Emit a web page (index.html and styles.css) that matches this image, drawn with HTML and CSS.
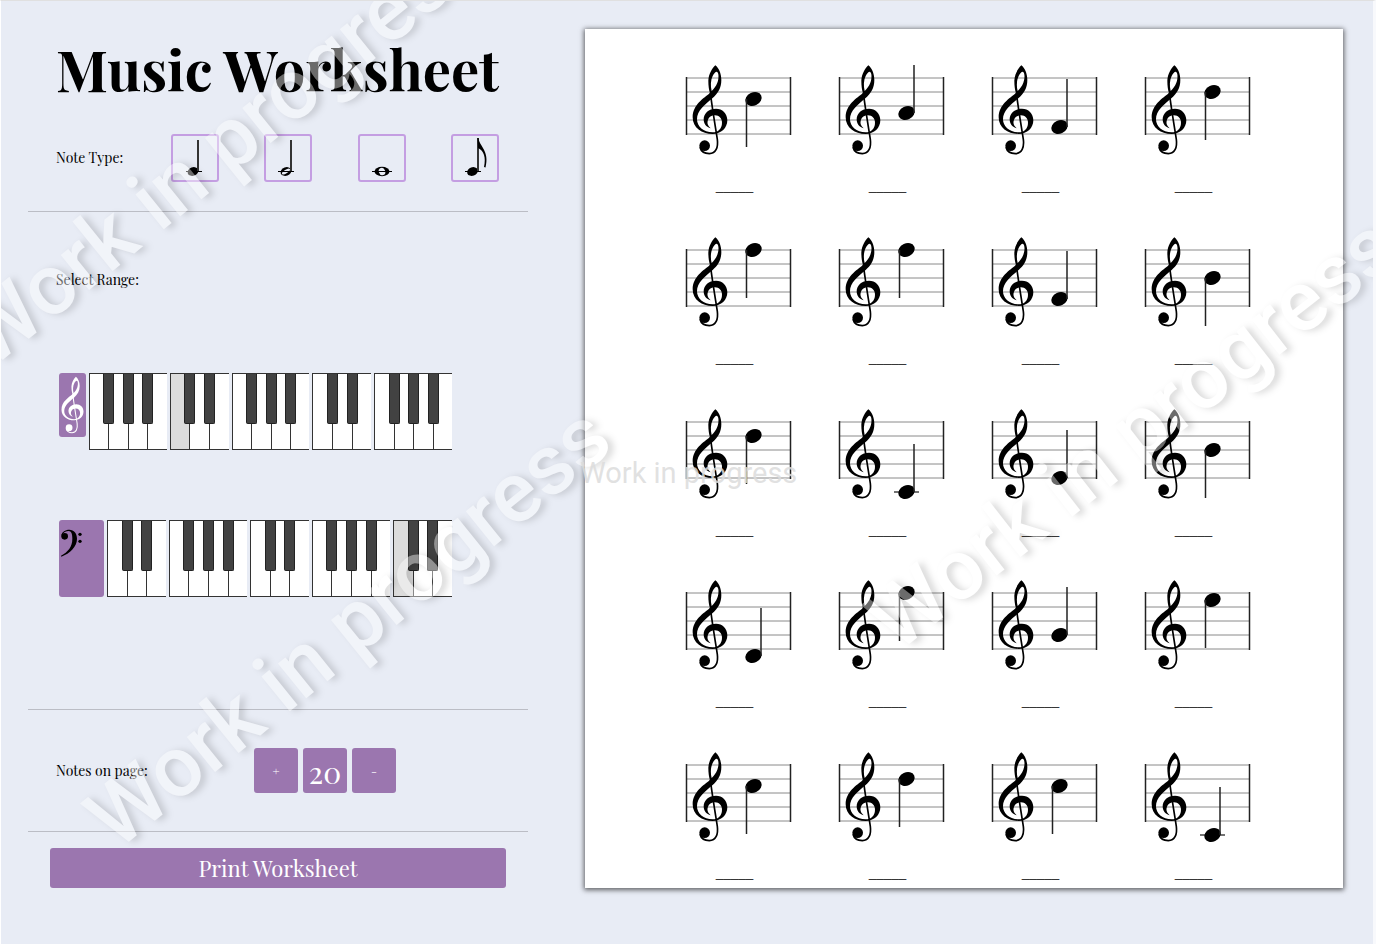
FILE: index.html
```html
<!DOCTYPE html>
<html lang="en">
<head>
<meta charset="utf-8">
<title>Music Worksheet</title>
<link rel="stylesheet" href="styles.css">
</head>
<body>
<svg class="defs" aria-hidden="true">
  <symbol id="treble" viewBox="30 13 108 274">
    <g id="treble-shape">
      <path fill="currentColor" fill-rule="evenodd" d="M100 16C90 26 80 42 79 62C79 78 81 90 84 99C66 114 32 134 32 172C32 204 60 222 92 222C118 222 136 204 136 181C136 160 121 146 102 146C80 146 65 160 65 178C65 192 74 202 86 205C78 198 75 191 77 183C80 171 89 166 99 166C112 166 120 176 120 188C120 206 108 217 92 217C64 217 45 199 45 178C45 152 68 134 92 114C108 100 118 84 118 60C118 40 110 24 100 16ZM104 35C111 36 111 56 106 68C102 78 96 86 89 93C85 78 86 60 92 48C96 40 100 35 104 35Z"/>
      <path fill="none" stroke="currentColor" stroke-width="5" d="M85 98C90 140 100 200 106 238C109 262 102 281 82 281C68 281 57 274 54 262"/>
      <circle fill="currentColor" cx="68" cy="257" r="16"/>
    </g>
  </symbol>
  <symbol id="bass" viewBox="60 52 70 90">
    <path d="M66 76C66 64 78 57 90 57C104 57 113 68 113 84C113 108 92 128 66 138L65 135C86 124 99 108 99 84C99 70 96 61 88 61C80 61 74 64 72 68Z"/>
    <circle cx="76" cy="77" r="10"/>
    <circle cx="122" cy="71" r="5"/>
    <circle cx="122" cy="92" r="5"/>
  </symbol>
</svg>

<main class="app">
  <section class="controls">
    <h1 class="title">Music Worksheet</h1>

    <div class="note-type">
      <span class="label">Note Type:</span>
      <div class="note-buttons">
        <button class="note-button" type="button" aria-label="Quarter note">
          <svg viewBox="0 0 44 44"><path class="ledger" d="M13 35.500h16"/><ellipse cx="20" cy="35.500" rx="5.500" ry="4.200" transform="rotate(-20 20 35.500)"/><path class="stem" d="M25 4v31"/></svg>
        </button>
        <button class="note-button" type="button" aria-label="Half note">
          <svg viewBox="0 0 44 44"><path class="ledger" d="M12 35.500h16"/><ellipse cx="20" cy="35.500" rx="5.500" ry="4.200" transform="rotate(-20 20 35.500)"/><ellipse class="hole" cx="20" cy="35.500" rx="4.600" ry="1.800" transform="rotate(-32 20 35.500)"/><path class="stem" d="M25 4v31"/><path class="thin" d="M16 35.500h8"/></svg>
        </button>
        <button class="note-button" type="button" aria-label="Whole note">
          <svg viewBox="0 0 44 44"><path class="ledger" d="M12 35.500h20"/><ellipse cx="22" cy="35.500" rx="7.500" ry="4.700"/><ellipse class="hole" cx="22" cy="35.500" rx="3.200" ry="3.800" transform="rotate(-20 22 35.500)"/><path class="thin" d="M18 35.500h8"/></svg>
        </button>
        <button class="note-button" type="button" aria-label="Eighth note">
          <svg viewBox="0 0 44 44"><path class="ledger" d="M12 35.500h16"/><ellipse cx="19.500" cy="35.500" rx="5.500" ry="4.200" transform="rotate(-20 19.500 35.500)"/><path class="stem" d="M25 2v33"/><path d="M24.500 2h1C26 10 37 15 32.500 31.500L31 31C33 21 31 15 25 12Z"/></svg>
        </button>
      </div>
    </div>

    <div class="range">
      <span class="label">Select Range:</span>
      <div class="keyboard-row">
        <button class="clef clef-treble" type="button" aria-label="Treble clef"><svg><use href="#treble"/></svg></button>
        <div class="keyboard" data-groups="4,3,4,3,4" data-selected="1"></div>
      </div>
      <div class="keyboard-row">
        <button class="clef clef-bass" type="button" aria-label="Bass clef"><svg><use href="#bass"/></svg></button>
        <div class="keyboard" data-groups="3,4,3,4,3" data-selected="4"></div>
      </div>
    </div>

    <div class="count">
      <span class="label">Notes on page:</span>
      <div class="count-buttons">
        <button class="step" type="button" aria-label="More notes">+</button>
        <output class="step step-value">20</output>
        <button class="step" type="button" aria-label="Fewer notes">-</button>
      </div>
    </div>

    <button class="print" type="button">Print Worksheet</button>
  </section>

  <section class="sheet" aria-label="Worksheet"></section>
</main>

<div class="watermarks" aria-hidden="true">
  <span class="mark mark-top">Work in progress</span>
  <span class="mark mark-left">Work in progress</span>
  <span class="mark mark-right">Work in progress</span>
  <span class="mark-center">Work in progress</span>
</div>
<script src="script.js"></script>
</body>
</html>
```
FILE: styles.css
```css
* {
  box-sizing: border-box;
}

body {
  margin: 0;
  min-height: 100vh;
  position: relative;
  background: #e8ecf5;
  border-top: 1px solid #e0e0e0;
  border-left: 1px solid #fff;
  border-right: 3px solid #f8f9fc;
  color: #000;
  font-family: "Playfair Display", "Liberation Serif", serif;
  font-size: 14px;
  line-height: 20px;
}

button {
  font: inherit;
  padding: 0;
  border: 0;
  cursor: pointer;
}

svg {
  display: block;
}

.defs {
  position: absolute;
  width: 0;
  height: 0;
}

.app {
  display: grid;
  grid-template-columns: minmax(0, 500fr) minmax(0, 758fr);
  align-items: start;
  gap: 57px;
  padding: 28px 30px 28px 27px;
}

.title {
  margin: 4px 0 0 28px;
  font-size: 56px;
  font-weight: 700;
  line-height: 72px;
}

.note-type,
.range,
.count {
  border-bottom: 1px solid #bbbdc5;
}

.note-type {
  display: flex;
  align-items: center;
  justify-content: space-between;
  padding: 29px 29px 29px 28px;
}

.note-buttons {
  display: flex;
  justify-content: space-between;
  width: 328px;
}

.note-button {
  width: 48px;
  height: 48px;
  border: 2px solid #c49ee2;
  border-radius: 3px;
  background: transparent;
}

.note-button .ledger,
.note-button .thin {
  stroke: #000;
  stroke-width: 1;
}

.note-button .stem {
  stroke: #333;
  stroke-width: 2;
}

.note-button .hole {
  fill: #e8ecf5;
}

.range {
  display: flex;
  flex-direction: column;
  padding: 58px 76px 112px 28px;
}

.keyboard-row {
  display: flex;
  align-items: flex-start;
  gap: 3px;
  margin-top: 83px;
  padding-left: 3px;
}

.keyboard-row + .keyboard-row {
  margin-top: 70px;
}

.clef {
  flex: none;
  border-radius: 3px;
  background: #9b76af;
}

.clef-treble {
  width: 27px;
  height: 64px;
  color: #fff;
}

.clef-treble svg {
  width: 23px;
  height: 58px;
  margin: 0 auto;
}

.clef-bass {
  display: flex;
  align-items: flex-start;
  width: 45px;
  height: 77px;
  padding-top: 8px;
}

.clef-bass svg {
  width: 24px;
  height: 30px;
}

.keyboard {
  display: flex;
  flex: 1;
  gap: 3px;
}

.octave {
  display: flex;
  flex-basis: 0;
  border: 1px solid #333;
  border-right: 0;
}

.key {
  position: relative;
  flex: 1;
  height: 75px;
}

.key + .key {
  border-left: 1px solid #333;
}

.white {
  display: block;
  width: 100%;
  height: 100%;
  background: #fff;
}

.white.selected {
  background: #dcdcdc;
}

.black {
  position: absolute;
  z-index: 1;
  top: 0;
  right: -6px;
  width: 11px;
  height: 50px;
  border: 1px solid #222;
  border-top: 0;
  border-radius: 0 0 2px 2px;
  background: #424242;
}

.count {
  display: flex;
  align-items: center;
  padding: 38px 28px;
}

.count .label {
  width: 198px;
}

.count-buttons {
  display: flex;
  gap: 5px;
}

.step {
  width: 44px;
  height: 45px;
  border-radius: 3px;
  background: #9b76af;
  color: #fff;
  font-size: 12px;
  text-align: center;
}

.step-value {
  font-size: 30px;
  line-height: 48px;
}

.print {
  display: block;
  width: calc(100% - 44px);
  height: 40px;
  margin: 16px 22px 0;
  border-radius: 3px;
  background: #9b76af;
  color: #fff;
  font-size: 22px;
}

.sheet {
  display: grid;
  grid-template-columns: repeat(4, 153px);
  grid-auto-rows: 1fr;
  justify-content: center;
  min-height: 859px;
  background: #fff;
  box-shadow: 0 1px 5px 1px rgba(0, 0, 0, 0.6);
}

.cell {
  display: flex;
  flex-direction: column;
  align-items: center;
  gap: 16px;
  padding-top: 31px;
}

.answer {
  font-family: "Liberation Serif", serif;
  font-size: 15px;
}

.staff {
  width: 113px;
  height: 100px;
  overflow: visible;
}

.staff .line {
  stroke: #8a8a8a;
  stroke-width: 1;
}

.staff .bar,
.staff .note-stem {
  stroke: #222;
  stroke-width: 1.5;
}

.staff .note-ledger {
  stroke: #444;
  stroke-width: 1.5;
}

.watermarks {
  position: absolute;
  z-index: 5;
  inset: 0;
  overflow: hidden;
  pointer-events: none;
  font-family: Roboto, sans-serif;
}

.mark {
  position: absolute;
  transform: translate(-50%, -50%) rotate(-39deg);
  color: #fff;
  opacity: 0.42;
  font-size: 85px;
  font-weight: 500;
  line-height: 86px;
  white-space: nowrap;
  text-shadow: 4px 4px 6px rgba(0, 0, 0, 0.32);
}

.mark-top {
  left: 221px;
  top: 144px;
}

.mark-left {
  left: 347px;
  top: 626px;
}

.mark-right {
  left: 1131px;
  top: 432px;
  transform: translate(-50%, -50%) rotate(-38deg);
}

.mark-center {
  position: absolute;
  left: 579px;
  top: 454px;
  color: rgba(220, 220, 220, 0.85);
  font-size: 29px;
  line-height: 36px;
  white-space: nowrap;
}
```
FILE: script.js
```js
// Steps below the top staff line (F5 = 0), four notes to a row
const notes = [
  3, 5, 7, 2,
  0, 0, 7, 4,
  2, 10, 8, 4,
  9, 0, 6, 1,
  3, 2, 3, 10
];

function staff(step) {
  const y = 18 + step * 7;
  const up = step > 4;
  const lines = [0, 1, 2, 3, 4]
    .map(i => `<path class="line" d="M8 ${18 + i * 14}H113"/>`).join("");
  const ledger = step === 10 ? `<path class="note-ledger" d="M63 ${y}H88"/>` : "";
  const stem = up ? `M83 ${y}v-48` : `M68.500 ${y}v48`;
  return `<svg class="staff" viewBox="0 0 113 100" role="img" aria-label="Note on treble staff">${lines}
    <path class="bar" d="M8.500 17v58M112.500 17v58"/>
    <g transform="translate(4 0) scale(0.3333)"><use href="#treble-shape"/></g>
    ${ledger}<ellipse cx="75.500" cy="${y}" rx="8.500" ry="6.500" transform="rotate(-25 75.500 ${y})"/>
    <path class="note-stem" d="${stem}"/></svg>`;
}

document.querySelector(".sheet").innerHTML = notes
  .map(step => `<div class="cell">${staff(step)}<span class="answer">_____</span></div>`)
  .join("");

document.querySelectorAll(".keyboard").forEach(board => {
  const selected = Number(board.dataset.selected);
  board.innerHTML = board.dataset.groups.split(",").map((size, g) => {
    const count = Number(size);
    let keys = "";
    for (let k = 0; k < count; k++) {
      const chosen = g === selected && k === 0 ? " selected" : "";
      const black = k < count - 1 ? '<button class="black" type="button" aria-label="Black key"></button>' : "";
      keys += `<div class="key"><button class="white${chosen}" type="button" aria-label="White key"></button>${black}</div>`;
    }
    return `<div class="octave" style="flex-grow:${count}">${keys}</div>`;
  }).join("");
});
```
